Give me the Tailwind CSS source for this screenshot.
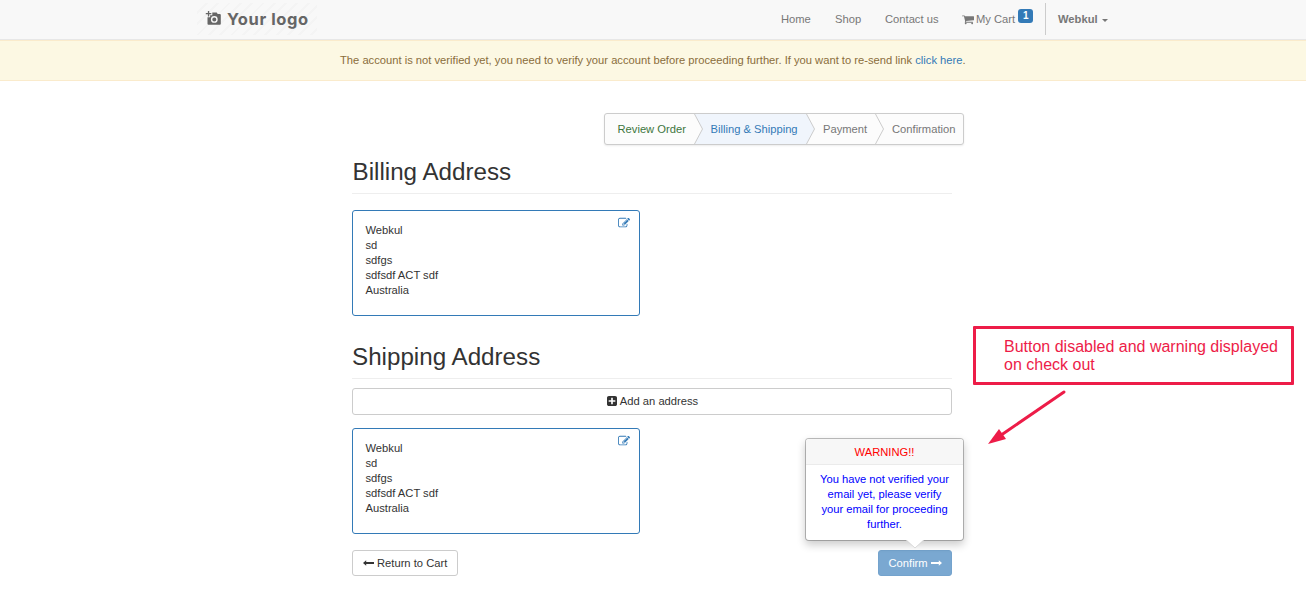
<!DOCTYPE html>
<html lang="en">
<head>
<meta charset="utf-8">
<title>Checkout</title>
<script src="https://cdn.jsdelivr.net/npm/@tailwindcss/browser@4"></script>
</head>
<body class="relative h-[603px] overflow-hidden bg-white font-['Liberation_Sans',Arial,sans-serif] text-[11.2px] leading-[15px] text-[#333]">
<svg class="hidden">
  <symbol id="edit" viewBox="0 0 1792 1792"><path d="M888 1184l116-116-152-152-116 116v56h96v96h56zm440-720q-16-16-33 1l-350 350q-17 17-1 33t33-1l350-350q17-17 1-33zm80 594v190q0 119-84.500 203.500t-203.500 84.500h-832q-119 0-203.500-84.500t-84.500-203.500v-832q0-119 84.500-203.500t203.500-84.500h832q63 0 117 25 15 7 18 23 3 17-9 29l-49 49q-14 14-32 8-23-6-45-6h-832q-66 0-113 47t-47 113v832q0 66 47 113t113 47h832q66 0 113-47t47-113v-126q0-13 9-22l64-64q15-15 35-7t20 29zm-96-738l288 288-672 672h-288v-288zm444 132l-92 92-288-288 92-92q28-28 68-28t68 28l152 152q28 28 28 68t-28 68z"/></symbol>
</svg>

<header class="flex h-10 border-b border-[#e7e7e7] bg-[#f8f8f8] pl-[197px]">
  <div class="mt-[3px] flex h-8 w-[120px] items-center bg-[repeating-linear-gradient(135deg,#f8f8f8_0px,#f8f8f8_6px,#f4f4f4_6px,#f4f4f4_8px)] pl-2 text-[#666]">
    <svg class="mr-[6px] -mt-[2px] h-4 w-4 shrink-0" viewBox="0 0 16 16" fill="currentColor"><path d="M2.900 1h1.300v2.100h2.100v1.200H4.200v2.100H2.900V4.300H.8V3.100h2.100z"/><path fill-rule="evenodd" d="M7.300 2.600h4.400l1 1.400h2.100q1 0 1 1v8.700q0 1-1 1H3.500q-1 0-1-1V7.300h2.600V5.200h2.200zM9.300 6a3.400 3.400 0 1 0 0 6.800a3.400 3.400 0 0 0 0-6.800zm0 1.400a2 2 0 1 1 0 4a2 2 0 0 1 0-4z"/></svg>
    <span class="-mt-px whitespace-nowrap font-['Inter',sans-serif] text-[16.5px] leading-8 font-bold tracking-[0.6px]">Your logo</span>
  </div>
  <nav class="ml-[464px] flex whitespace-nowrap pt-3 text-[#777]">
    <a class="w-[54px]">Home</a>
    <a class="w-[50px]">Shop</a>
    <a class="w-[77px]">Contact us</a>
    <a class="flex w-[83px]"><svg class="mt-[2px] mr-[2px] h-[11px] w-[12px]" viewBox="0 0 1664 1792" preserveAspectRatio="none" fill="currentColor"><path d="M640 1536q0 52-38 90t-90 38-90-38-38-90 38-90 90-38 90 38 38 90zm896 0q0 52-38 90t-90 38-90-38-38-90 38-90 90-38 90 38 38 90zm128-1088v512q0 24-16.500 42.500t-40.500 21.500l-1044 122q13 60 13 70 0 16-24 64h920q26 0 45 19t19 45-19 45-45 19h-1024q-26 0-45-19t-19-45q0-11 8-31.500t16-36 21.500-40 15.500-29.500l-177-823h-204q-26 0-45-19t-19-45 19-45 45-19h256q16 0 28.500 6.500t19.500 15.500 13 24.500 8 26 5.500 29.500 4.500 26h1201q26 0 45 19t19 45z"/></svg>My Cart<span class="-mt-[3px] ml-[3px] h-[14px] w-[15px] rounded-[3px] bg-[#337ab7] text-center text-[10px] leading-[14px] font-bold text-white">1</span></a>
    <a class="-mt-[9px] flex h-8 border-l border-[#ccc] pt-[9px] pl-3 font-bold">Webkul<span class="mt-[7px] ml-1 h-0 border-x-[3px] border-t-[3px] border-x-transparent border-t-[#777]"></span></a>
  </nav>
</header>

<div class="h-[41px] border-y border-[#faebcc] bg-[#fcf8e3] pt-3 pl-[340px] whitespace-nowrap text-[#8a6d3b]">The account is not verified yet, you need to verify your account before proceeding further. If you want to re-send link <a class="text-[#337ab7]">click here</a>.</div>

<main class="ml-[352px] w-[600px] pt-8">
  <ol class="relative ml-[252px] flex h-8 w-[360px] rounded-[3px] border border-[#ccc] bg-[#fcfcfc] pt-2 whitespace-nowrap text-[#777] shadow-[0_1px_2px_rgba(0,0,0,0.08)]">
    <svg class="absolute top-0 left-0 h-[30px] w-[358px]" viewBox="0 0 358 30" fill="none" stroke="#ccc"><path d="M89.500 0L97.500 15L89.500 30H201.500L209.500 15L201.500 0z" fill="#f0f5fc" stroke="none"/><path d="M89.500 0L97.500 15L89.500 30M201.500 0L209.500 15L201.500 30M270.500 0L278.500 15L270.500 30"/></svg>
    <li class="relative ml-[12.5px] w-[93px] text-[#3c763d]">Review Order</li>
    <li class="relative w-[112.5px] text-[#337ab7]">Billing &amp; Shipping</li>
    <li class="relative w-[69px]">Payment</li>
    <li class="relative">Confirmation</li>
  </ol>

  <h2 class="mt-[13px] h-9 border-b border-[#eee] pl-[0.5px] text-[24.2px] leading-[27px]">Billing Address</h2>
  <section class="mt-4 flex h-[106px] w-72 justify-between rounded-[3px] border border-[#337ab7] pt-3 pr-[9px] pl-[12.5px]">
    <address class="not-italic">Webkul<br>sd<br>sdfgs<br>sdfsdf ACT sdf<br>Australia</address>
    <svg class="-mt-[6px] h-3 w-3" fill="#337ab7"><use href="#edit"/></svg>
  </section>

  <h2 class="mt-[27px] h-9 border-b border-[#eee] text-[24.2px] leading-[27px]">Shipping Address</h2>
  <button class="mt-[9px] flex h-[27px] w-full items-center justify-center rounded-[3px] border border-[#ccc] pl-px"><svg class="mr-[3px] -mt-px h-[10px] w-[10px]" viewBox="128 128 1536 1536" fill="currentColor"><path d="M1408 960v-128q0-26-19-45t-45-19h-320v-320q0-26-19-45t-45-19h-128q-26 0-45 19t-19 45v320h-320q-26 0-45 19t-19 45v128q0 26 19 45t45 19h320v320q0 26 19 45t45 19h128q26 0 45-19t19-45v-320h320q26 0 45-19t19-45zm256-544v960q0 119-84.500 203.500t-203.500 84.500h-960q-119 0-203.500-84.500t-84.500-203.500v-960q0-119 84.500-203.500t203.500-84.500h960q119 0 203.500 84.500t84.500 203.500z"/></svg>Add an address</button>
  <section class="mt-[13px] flex h-[106px] w-72 justify-between rounded-[3px] border border-[#337ab7] pt-3 pr-[9px] pl-[12.5px]">
    <address class="not-italic">Webkul<br>sd<br>sdfgs<br>sdfsdf ACT sdf<br>Australia</address>
    <svg class="-mt-[6px] h-3 w-3" fill="#337ab7"><use href="#edit"/></svg>
  </section>

  <div class="mt-4 flex justify-between whitespace-nowrap">
    <button class="flex h-[26px] w-[106px] items-center rounded-[3px] border border-[#ccc] pl-[10px]"><svg class="mr-[3px] -mt-px h-[6px] w-[11px]" viewBox="0 0 11 6" fill="currentColor"><path d="M0 3L3.200 .3V2.100H11V3.900H3.200V5.700z"/></svg>Return to Cart</button>
    <button class="flex h-[26px] w-[74px] items-center rounded-[3px] border border-[#74a3cd] bg-[#7aa8d1] pl-[9.500px] text-white">Confirm<svg class="ml-[3px] -mt-px h-[6px] w-[11px]" viewBox="0 0 11 6" fill="currentColor"><path d="M11 3L7.800 .3V2.100H0V3.900H7.800V5.700z"/></svg></button>
  </div>
</main>

<div class="absolute top-[438px] left-[805px] h-[103px] w-[159px] rounded-[4px] border border-black/25 bg-white bg-clip-padding text-center shadow-[0_4px_8px_rgba(0,0,0,0.2)]">
  <h3 class="h-[26px] rounded-t-[3px] border-b border-[#ebebeb] bg-[#f7f7f7] pt-[6px] text-[#f00]">WARNING!!</h3>
  <p class="px-3 pt-[7px] text-[#00f]">You have not verified your email yet, please verify your email for proceeding further.</p>
  <svg class="absolute top-[100px] left-[99px] h-[10px] w-[20px]" viewBox="0 0 20 10"><path d="M1 1L10 9L19 1z" fill="#fff"/><path d="M2 1.500L10 9L18 1.500" fill="none" stroke="#000" stroke-opacity=".12"/></svg>
</div>

<div class="absolute top-[326px] left-[973px] h-[59px] w-[321px] rounded-[1px] border-[3px] border-[#ed1c48] pt-[9px] pl-7 text-[16px] leading-[18px] whitespace-nowrap text-[#ed1c48]">Button disabled and warning displayed<br>on check out</div>
<svg class="absolute top-[386px] left-[984px] h-[62px] w-[86px]" viewBox="0 0 86 62" fill="#ed1c48"><path d="M80 6L18 48.500" stroke="#ed1c48" stroke-width="3" stroke-linecap="round"/><path d="M4 58L15 43L22 53z"/></svg>
</body>
</html>
